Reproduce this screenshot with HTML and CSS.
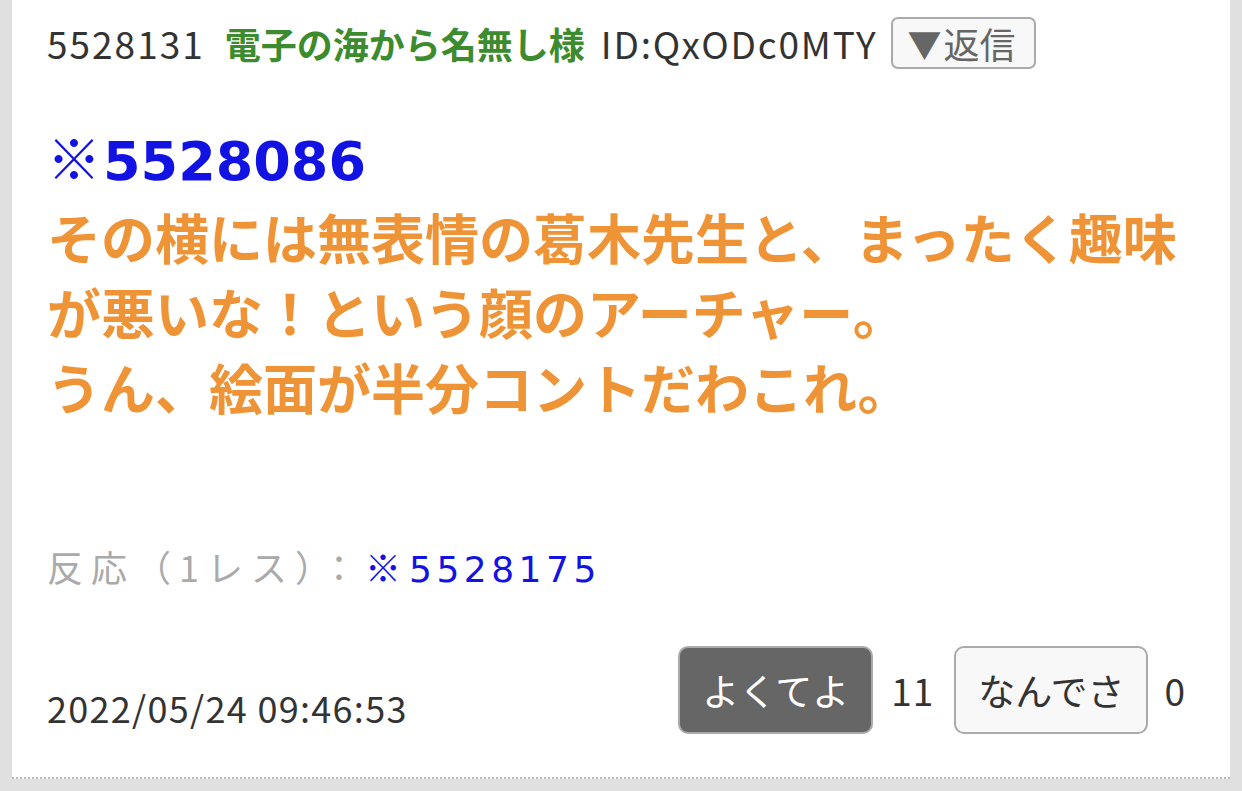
FILE: index.html
```html
<!DOCTYPE html>
<html lang="ja">
<head>
<meta charset="utf-8">
<link rel="stylesheet" href="styles.css">
</head>
<body>
<div class="post">
  <div class="post-head">
    <span class="post-no">5528131</span>
    <span class="post-name">電子の海から名無し様</span>
    <span class="post-id">ID:QxODc0MTY</span>
    <span class="reply-btn"><span class="tri">▼</span>返信</span>
  </div>
  <div class="post-body">
    <div class="anchor">※<span class="anchor-num">5528086</span></div>
    <div class="message">その横には無表情の葛木先生と、まったく趣味が悪いな！という顔のアーチャー。<br>うん、絵面が半分コントだわこれ。</div>
  </div>
  <div class="reactions"><span class="react-label">反応（1レス）：</span><span class="react-link">※<span class="react-num">5528175</span></span></div>
  <div class="post-foot">
    <span class="post-date">2022/05/24 09:46:53</span>
    <div class="votes">
      <span class="vote-btn vote-good">よくてよ</span>
      <span class="vote-count">11</span>
      <span class="vote-btn vote-bad">なんでさ</span>
      <span class="vote-count">0</span>
    </div>
  </div>
</div>
</body>
</html>
```

FILE: styles.css
```css
html, body {
  margin: 0;
  padding: 0;
}
body {
  background: #e0e0e0;
  font-family: "Noto Sans CJK JP", "Noto Sans", sans-serif;
  color: #333;
  height: 791px;
  overflow: hidden;
}
.post {
  margin: 0 12px;
  background: #fff;
  padding: 17px 45px 43px 35px;
  border-bottom: 2px dotted #bbb;
}
.post-head {
  display: flex;
  align-items: center;
  height: 52px;
  font-size: 36px;
  white-space: nowrap;
}
.post-no {
  color: #333;
  font-size: 37px;
  letter-spacing: 2px;
  margin-right: 20px;
}
.post-name {
  color: #3d8b2f;
  font-weight: bold;
  margin-right: 16px;
}
.post-id {
  color: #333;
  font-size: 37px;
  letter-spacing: 1.8px;
  margin-right: 14px;
}
.reply-btn {
  box-sizing: border-box;
  height: 52px;
  display: flex;
  align-items: center;
  padding: 0 18px 0 14px;
  border: 2px solid #aaa;
  border-radius: 7px;
  background: #f8f8f8;
  color: #666;
  font-size: 36px;
}
.tri {
  font-size: 34px;
  margin-right: 2px;
}
.post-body {
  margin-top: 50px;
  font-size: 54px;
  font-weight: bold;
  line-height: 75px;
}
.anchor {
  color: #1212e2;
}
.anchor-num {
  font-family: "DejaVu Sans", "Noto Sans", sans-serif;
  margin-left: 2px;
}
.message {
  color: #ee9437;
}
.reactions {
  margin-top: 117px;
  height: 50px;
  font-size: 36px;
  line-height: 50px;
  letter-spacing: 8px;
}
.react-label {
  color: #aaa;
}
.react-link {
  color: #1212e2;
}
.react-num {
  font-family: "DejaVu Sans", "Noto Sans", sans-serif;
  letter-spacing: 4.5px;
  line-height: 1;
}
.post-foot {
  margin-top: 55px;
  display: flex;
  justify-content: space-between;
  align-items: flex-end;
}
.post-date {
  font-size: 36px;
  line-height: 50px;
  color: #333;
  letter-spacing: 1.3px;
  margin-bottom: 2px;
}
.votes {
  display: flex;
  align-items: center;
}
.vote-btn {
  box-sizing: border-box;
  height: 88px;
  display: flex;
  align-items: center;
  padding: 0 22px;
  border: 2px solid #aaa;
  border-radius: 10px;
  font-size: 37px;
}
.vote-good {
  background: #666;
  color: #fff;
}
.vote-bad {
  background: #f8f8f8;
  color: #333;
}
.vote-count {
  font-size: 37px;
  color: #333;
  margin: 0 20px 0 18px;
  letter-spacing: 1px;
}
.vote-count:last-child {
  margin: 0 0 0 16px;
  letter-spacing: 0;
}
```
